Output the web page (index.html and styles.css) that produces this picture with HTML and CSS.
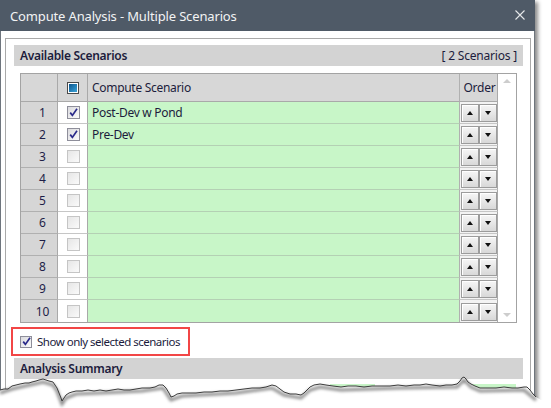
FILE: index.html
```html
<!DOCTYPE html>
<html>
<head>
<meta charset="utf-8">
<link rel="stylesheet" href="styles.css">
</head>
<body>
<div class="window">
  <div class="titlebar">
    <span class="title">Compute Analysis - Multiple Scenarios</span>
    <svg class="close" width="10" height="10" viewBox="0 0 10 10"><path d="M0.5 0.5 L9.5 9.5 M9.5 0.5 L0.5 9.5" stroke="#e6e8ea" stroke-width="1.1" fill="none"/></svg>
  </div>
  <div class="body">
    <div class="group">
      <div class="section-head">
        <span class="sh-title">Available Scenarios</span>
        <span class="sh-count">[ 2 Scenarios ]</span>
      </div>
      <div class="grid">
        <div class="cells">
          <div class="c hd num"></div>
          <div class="c hd chk"><span class="cb-head"><span class="cb-head-fill"></span></span></div>
          <div class="c hd name">Compute Scenario</div>
          <div class="c hd order">Order</div>

          <div class="c num">1</div>
          <div class="c chk"><span class="cb on"><svg width="9" height="9" viewBox="0 0 9 9"><path d="M1.2 4.6 L3.4 7.4 L8 0.8" stroke="#2a2a8a" stroke-width="1.7" fill="none"/></svg></span></div>
          <div class="c name">Post-Dev w Pond</div>
          <div class="c order"><span class="btn"><span class="tri-up"></span></span><span class="btn"><span class="tri-down"></span></span></div>

          <div class="c num">2</div>
          <div class="c chk"><span class="cb on"><svg width="9" height="9" viewBox="0 0 9 9"><path d="M1.2 4.6 L3.4 7.4 L8 0.8" stroke="#2a2a8a" stroke-width="1.7" fill="none"/></svg></span></div>
          <div class="c name">Pre-Dev</div>
          <div class="c order"><span class="btn"><span class="tri-up"></span></span><span class="btn"><span class="tri-down"></span></span></div>

          <div class="c num">3</div>
          <div class="c chk"><span class="cb"></span></div>
          <div class="c name"></div>
          <div class="c order"><span class="btn"><span class="tri-up"></span></span><span class="btn"><span class="tri-down"></span></span></div>

          <div class="c num">4</div>
          <div class="c chk"><span class="cb"></span></div>
          <div class="c name"></div>
          <div class="c order"><span class="btn"><span class="tri-up"></span></span><span class="btn"><span class="tri-down"></span></span></div>

          <div class="c num">5</div>
          <div class="c chk"><span class="cb"></span></div>
          <div class="c name"></div>
          <div class="c order"><span class="btn"><span class="tri-up"></span></span><span class="btn"><span class="tri-down"></span></span></div>

          <div class="c num">6</div>
          <div class="c chk"><span class="cb"></span></div>
          <div class="c name"></div>
          <div class="c order"><span class="btn"><span class="tri-up"></span></span><span class="btn"><span class="tri-down"></span></span></div>

          <div class="c num">7</div>
          <div class="c chk"><span class="cb"></span></div>
          <div class="c name"></div>
          <div class="c order"><span class="btn"><span class="tri-up"></span></span><span class="btn"><span class="tri-down"></span></span></div>

          <div class="c num">8</div>
          <div class="c chk"><span class="cb"></span></div>
          <div class="c name"></div>
          <div class="c order"><span class="btn"><span class="tri-up"></span></span><span class="btn"><span class="tri-down"></span></span></div>

          <div class="c num">9</div>
          <div class="c chk"><span class="cb"></span></div>
          <div class="c name"></div>
          <div class="c order"><span class="btn"><span class="tri-up"></span></span><span class="btn"><span class="tri-down"></span></span></div>

          <div class="c num last">10</div>
          <div class="c chk last"><span class="cb"></span></div>
          <div class="c name last"></div>
          <div class="c order last"><span class="btn"><span class="tri-up"></span></span><span class="btn"><span class="tri-down"></span></span></div>
        </div>
        <div class="scrollbar"><span class="s-up"></span><span class="s-down"></span></div>
      </div>
      <div class="show-row">
        <span class="cb on small"><svg width="9" height="9" viewBox="0 0 9 9"><path d="M1.2 4.6 L3.4 7.4 L8 0.8" stroke="#2a2a8a" stroke-width="1.7" fill="none"/></svg></span>
        <span class="show-label">Show only selected scenarios</span>
      </div>
      <div class="section-head">
        <span class="sh-title">Analysis Summary</span>
      </div>
      <div class="peek">
        <span class="pw1"></span><span class="pg1"></span><span class="pw2"></span><span class="pg2"></span>
      </div>
    </div>
  </div>
</div>
<svg class="torn" width="551" height="40" viewBox="0 368 551 40">
  <defs>
    <filter id="blur" x="-5%" y="-50%" width="110%" height="200%"><feGaussianBlur stdDeviation="1.6"/></filter>
  </defs>
  <path d="M0 390 L4 389 L8 389 L12 386 L16 385 L20 384 L25 383 L29 383 L32 382 L36 381 L39 380 L43 379 L46 380 L49 381 L53 382 L55 385 L57 388 L59 393 L61 398 L62 401 L64 398 L66 395 L69 393 L72 392 L76 391 L82 391 L88 390 L94 391 L100 390 L106 391 L112 390 L118 389 L124 390 L130 390 L136 389 L142 388 L150 388 L155 387 L159 385 L163 385 L166 388 L169 393 L171 397 L174 396 L177 394 L182 393 L188 393 L196 393 L204 392 L212 392 L220 391 L228 391 L236 390 L244 389 L252 388 L260 388 L266 387 L272 385 L276 386 L280 389 L284 392 L290 394 L296 394 L301 395 L304 393 L307 390 L310 387 L314 385 L320 384 L326 385 L333 386 L341 387 L348 386 L356 386 L364 387 L372 386 L380 386 L390 386 L398 385 L406 386 L414 385 L420 385 L426 384 L432 385 L440 386 L446 385 L452 385 L457 384 L460 381 L462 378 L464 377 L466 379 L468 382 L471 384 L475 386 L480 388 L488 388 L496 388 L504 387 L512 388 L518 388 L524 387 L527 387 L530 390 L533 394 L536 397 L541 400 L551 400 L551 408 L0 408 Z" fill="#ffffff"/>
  <path d="M0 393 L12 389 L25 386 L39 383 L43 382 L53 385 L57 391 L62 404 L66 398 L76 394 L100 393 L142 391 L163 388 L171 400 L182 396 L236 393 L272 388 L284 395 L301 398 L310 390 L320 387 L341 390 L398 388 L457 387 L464 380 L471 387 L480 391 L524 390 L536 400" stroke="rgba(0,0,0,0.45)" stroke-width="3" fill="none" filter="url(#blur)"/>
  <path d="M0 390 L4 389 L8 389 L12 386 L16 385 L20 384 L25 383 L29 383 L32 382 L36 381 L39 380 L43 379 L46 380 L49 381 L53 382 L55 385 L57 388 L59 393 L61 398 L62 401 L64 398 L66 395 L69 393 L72 392 L76 391 L82 391 L88 390 L94 391 L100 390 L106 391 L112 390 L118 389 L124 390 L130 390 L136 389 L142 388 L150 388 L155 387 L159 385 L163 385 L166 388 L169 393 L171 397 L174 396 L177 394 L182 393 L188 393 L196 393 L204 392 L212 392 L220 391 L228 391 L236 390 L244 389 L252 388 L260 388 L266 387 L272 385 L276 386 L280 389 L284 392 L290 394 L296 394 L301 395 L304 393 L307 390 L310 387 L314 385 L320 384 L326 385 L333 386 L341 387 L348 386 L356 386 L364 387 L372 386 L380 386 L390 386 L398 385 L406 386 L414 385 L420 385 L426 384 L432 385 L440 386 L446 385 L452 385 L457 384 L460 381 L462 378 L464 377 L466 379 L468 382 L471 384 L475 386 L480 388 L488 388 L496 388 L504 387 L512 388 L518 388 L524 387 L527 387 L530 390 L533 394 L536 397" stroke="#3c3c3c" stroke-width="1" fill="none"/>
</svg>
</body>
</html>
```

FILE: styles.css
```css
html, body {
  margin: 0;
  padding: 0;
}
body {
  width: 551px;
  height: 408px;
  overflow: hidden;
  position: relative;
  background: #ffffff;
  font-family: "Noto Sans", "Open Sans", sans-serif;
  font-size: 12px;
  color: #1c1c3c;
}
.window {
  width: 535px;
  height: 404px;
  display: flex;
  flex-direction: column;
  background: #ffffff;
  box-shadow: 3px 2px 4px rgba(0, 0, 0, 0.45);
}
.titlebar {
  height: 31px;
  flex: none;
  background: #4f5a67;
  display: flex;
  align-items: center;
  padding-left: 10px;
  padding-right: 10px;
}
.title {
  color: #f2f3f4;
  font-size: 13px;
  letter-spacing: -0.15px;
  margin-top: 1px;
}
.close {
  margin-left: auto;
  margin-top: -1px;
}
.body {
  flex: 1;
  display: flex;
  flex-direction: column;
  border-left: 1px solid #6e757d;
  border-right: 1px solid #6e757d;
  padding: 7px 3px 0 4px;
}
.group {
  flex: 1;
  border: 1px solid #a9a9a9;
  border-bottom: none;
  padding: 6px 7px 0 8px;
  display: flex;
  flex-direction: column;
}
.section-head {
  height: 21px;
  flex: none;
  background: #d3d3d3;
  display: flex;
  align-items: center;
  justify-content: space-between;
  padding: 0 6px;
}
.sh-title {
  font-weight: 600;
  letter-spacing: -0.3px;
}
.sh-count {
  letter-spacing: -0.2px;
}
.grid {
  margin: 7px 6px 0 6px;
  height: 250px;
  flex: none;
  box-sizing: border-box;
  border: 1px solid #a3a3a3;
  display: flex;
}
.cells {
  display: grid;
  grid-template-columns: 37px 30px 372px 38px;
  grid-template-rows: 28px repeat(10, 22px);
}
.c {
  box-sizing: border-box;
  border-right: 1px solid #a9a9a9;
  border-bottom: 1px solid #c6c6c6;
  display: flex;
  align-items: center;
}
.c.last {
  border-bottom: none;
}
.c.hd {
  background: #d7d7d7;
  border-bottom: 1px solid #a9a9a9;
}
.num {
  background: #d6d6d6;
  justify-content: center;
  padding-left: 7px;
  color: #1e1e48;
  border-bottom-color: #b0b0b0;
}
.chk {
  background: #ffffff;
  justify-content: center;
  padding-left: 1px;
}
.name {
  background: #c8f6c8;
  border-bottom-color: #b4d0b4;
  border-right-color: #b0b0b0;
  padding-left: 4px;
  letter-spacing: -0.3px;
}
.c.hd.name {
  background: #d7d7d7;
  border-bottom-color: #a9a9a9;
}
.order {
  background: #f3f3f3;
  padding: 1px 0 0 1px;
  gap: 0;
  align-items: center;
}
.c.hd.order {
  justify-content: center;
  padding: 0 0 0 2px;
  letter-spacing: -0.2px;
}
.btn {
  width: 18px;
  height: 18px;
  box-sizing: border-box;
  border: 1px solid #9c9c9c;
  box-shadow: inset 1px 1px 0 #ffffff;
  background: linear-gradient(#f6f6f6, #d8d8d8);
  display: inline-flex;
  align-items: center;
  justify-content: center;
}
.tri-up {
  width: 0;
  height: 0;
  border-left: 3.5px solid transparent;
  border-right: 3.5px solid transparent;
  border-bottom: 4px solid #111111;
}
.tri-down {
  width: 0;
  height: 0;
  border-left: 3.5px solid transparent;
  border-right: 3.5px solid transparent;
  border-top: 4px solid #111111;
}
.scrollbar {
  flex: 1;
  background: #ffffff;
  display: flex;
  flex-direction: column;
  align-items: center;
  justify-content: space-between;
  padding: 5px 0 5px;
}
.s-up {
  width: 0;
  height: 0;
  border-left: 4px solid transparent;
  border-right: 4px solid transparent;
  border-bottom: 4px solid #cdcdcd;
}
.s-down {
  width: 0;
  height: 0;
  border-left: 4px solid transparent;
  border-right: 4px solid transparent;
  border-top: 4px solid #cdcdcd;
}
.cb {
  width: 13px;
  height: 13px;
  flex: none;
  box-sizing: border-box;
  border: 1px solid #c5c5c5;
  background: linear-gradient(135deg, #e6e6e6, #fafafa);
  display: inline-flex;
  align-items: center;
  justify-content: center;
}
.cb.on {
  border-color: #8e8e9a;
  background: linear-gradient(135deg, #dadade, #fbfbfb);
}
.cb.small {
  width: 12px;
  height: 12px;
}
.cb-head {
  width: 12px;
  height: 12px;
  box-sizing: border-box;
  border: 1px solid #4a4a4a;
  background: #ffffff;
  padding: 1px;
  display: inline-flex;
  margin-top: 1px;
}
.cb-head-fill {
  flex: 1;
  background: linear-gradient(135deg, #0d5790, #3aa4d8);
}
.show-row {
  margin: 4px 0 0 -3px;
  width: 179px;
  height: 29px;
  flex: none;
  box-sizing: border-box;
  border: 2px solid #f24646;
  display: flex;
  align-items: center;
  padding-left: 7px;
  gap: 5px;
  white-space: nowrap;
}
.show-label {
  font-size: 11.5px;
  letter-spacing: -0.5px;
}
.show-row + .section-head {
  margin-top: 2px;
}
.peek {
  display: flex;
  height: 24px;
  flex: none;
  margin-top: 5px;
}
.pw1 { width: 316px; }
.pg1 { width: 45px; background: #c8f6c8; }
.pw2 { width: 90px; }
.pg2 { width: 51px; background: #c8f6c8; }
.torn {
  position: absolute;
  left: 0;
  top: 368px;
}
```
